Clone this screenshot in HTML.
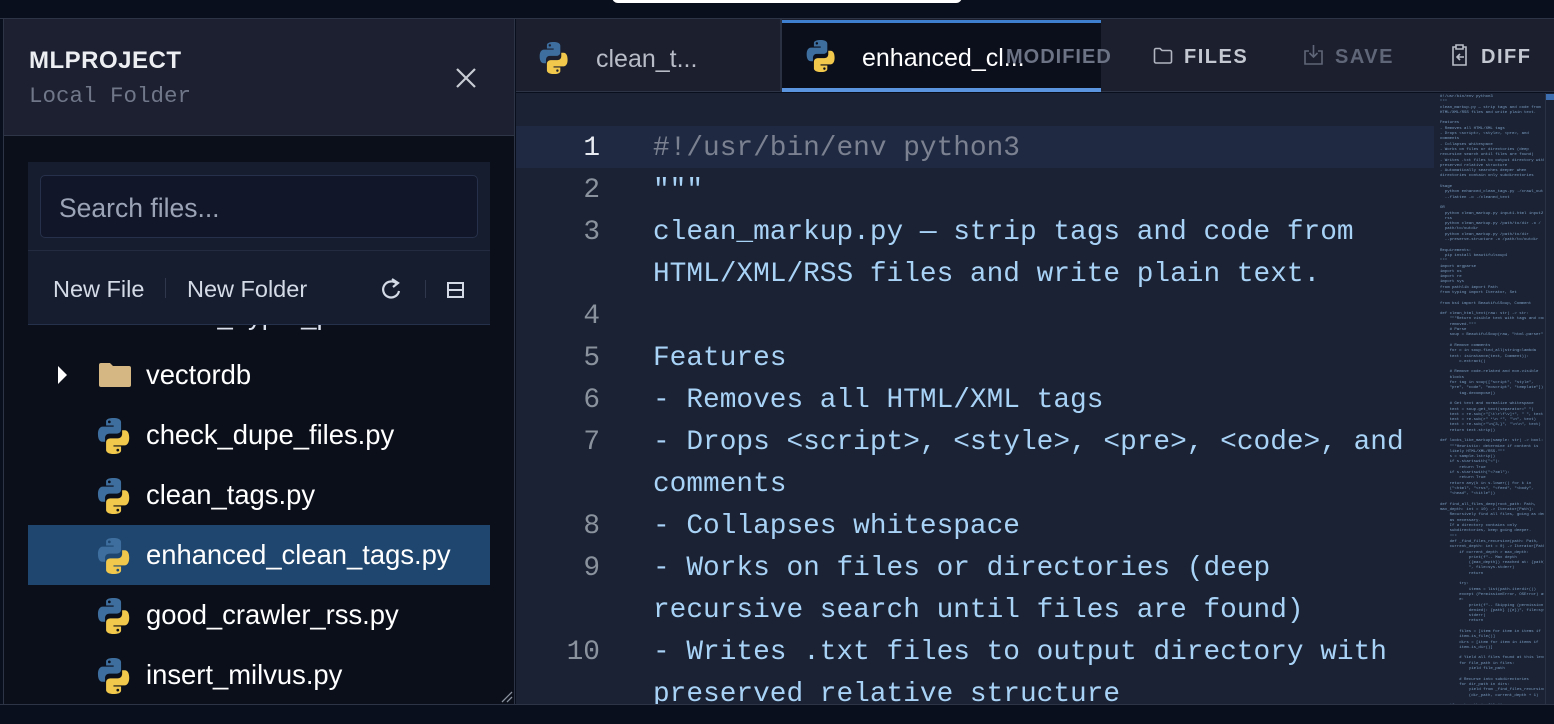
<!DOCTYPE html>
<html><head><meta charset="utf-8">
<style>
*{margin:0;padding:0;box-sizing:border-box}
html,body{width:1554px;height:724px;overflow:hidden}
body{background:#0a0f1d;font-family:"Liberation Sans",sans-serif;position:relative}
.abs{position:absolute}
.mono{font-family:"Liberation Mono",monospace}
.code{position:absolute;left:653px;font-family:"Liberation Mono",monospace;font-size:27.8px;color:#a9d2f7;white-space:pre;line-height:42px}
.ln{position:absolute;width:84px;left:516px;text-align:right;font-family:"Liberation Mono",monospace;font-size:27.8px;color:#8a929e;line-height:42px}
.row{position:absolute;left:28px;width:462px;height:60px;color:#fff;font-size:27.4px;line-height:60px}
.row .t{position:absolute;left:118px}
.row svg{position:absolute;left:67px;top:12px}
</style></head><body>
<svg width="0" height="0" style="position:absolute"><defs>
<g id="py">
<path d="M17.5 1C10 1 10.5 4.3 10.5 4.3V8h7.2v1.1H7.6S2.8 8.6 2.8 16.2s4.2 7.3 4.2 7.3h2.5v-3.5s-.1-4.2 4.1-4.2h7.1s4-.1 4-3.9V5.1S25.3 1 17.5 1zM13.6 3.3a1.3 1.3 0 110 2.6 1.3 1.3 0 010-2.6z" fill="#3d6e9e"/>
<path d="M17.7 35c7.5 0 7-3.3 7-3.3V28h-7.2v-1.1h10.1s4.8.5 4.8-7.1-4.2-7.3-4.2-7.3h-2.5V16s.1 4.2-4.1 4.2h-7.1s-4 .1-4 3.900v6.8S9.9 35 17.7 35zm3.9-2.3a1.3 1.3 0 110-2.6 1.3 1.3 0 010 2.6z" fill="#f1c84b"/>
</g></defs></svg>

<div class="abs" style="left:612px;top:-4px;width:350px;height:7px;background:#fff;border-radius:0 0 6px 6px"></div>
<div class="abs" style="left:0;top:18px;width:1554px;height:1px;background:#2c3446"></div>

<!-- sidebar -->
<div class="abs" style="left:3px;top:19px;width:512px;height:686px;background:#0b0f1a;border-left:1px solid #2c3446;border-right:1px solid #2c3446"></div>
<div class="abs" style="left:4px;top:19px;width:510px;height:117px;background:#1c2030;border-bottom:1px solid #2e3547"></div>
<div class="abs" style="left:29px;top:47px;color:#eceef2;font-weight:bold;font-size:24px;letter-spacing:0.5px">MLPROJECT</div>
<div class="abs mono" style="left:29px;top:83px;color:#707789;font-size:22.5px">Local Folder</div>
<svg class="abs" style="left:456px;top:68px" width="20" height="20"><path d="M1 1L19 19M19 1L1 19" stroke="#c8ccd4" stroke-width="2.2"/></svg>

<div class="row" style="top:285px;color:#dbe2ee"><span class="t" style="top:0">check_hyper_p</span></div>
<div class="abs" style="left:28px;top:162px;width:462px;height:163px;background:#161d2f;border-bottom:1px solid #25304a"></div>
<div class="abs" style="left:40px;top:175px;width:438px;height:63px;background:#111729;border:1px solid #27304a;border-radius:5px"></div>
<div class="abs" style="left:59px;top:193px;color:#9ba4b6;font-size:26.5px">Search files...</div>
<div class="abs" style="left:28px;top:250px;width:462px;height:1px;background:#222b40"></div>
<div class="abs" style="left:53px;top:276px;color:#d4dbe7;font-size:23.5px">New File</div>
<div class="abs" style="left:165px;top:278px;width:1px;height:20px;background:#2e374c"></div>
<div class="abs" style="left:187px;top:276px;color:#d4dbe7;font-size:23.5px">New Folder</div>
<svg class="abs" style="left:381px;top:276px" width="22" height="24" viewBox="0 0 22 24"><path d="M16 8A8 8 0 1 0 18 15" fill="none" stroke="#d4dbe7" stroke-width="2.2"/><path d="M11 3l6 4-5 4" fill="none" stroke="#d4dbe7" stroke-width="2.2"/></svg>
<div class="abs" style="left:425px;top:280px;width:1px;height:18px;background:#2e374c"></div>
<svg class="abs" style="left:447px;top:282px" width="17" height="16"><rect x="1" y="1" width="15" height="14" fill="none" stroke="#d4dbe7" stroke-width="2"/><path d="M1 8h15" stroke="#d4dbe7" stroke-width="2"/></svg>

<div class="row" style="top:345px"><svg width="14" height="20" style="left:28px;top:20px"><path d="M2 1l9 9-9 9z" fill="#fff"/></svg><svg width="32" height="26" style="left:71px;top:17px"><path d="M0 3a2 2 0 012-2h9l3 3h16a2 2 0 012 2v17a2 2 0 01-2 2H2a2 2 0 01-2-2z" fill="#d4b782"/></svg><span class="t">vectordb</span></div>
<div class="row" style="top:405px"><svg width="38" height="38" viewBox="2 0 32 36"><use href="#py"/></svg><span class="t">check_dupe_files.py</span></div>
<div class="row" style="top:465px"><svg width="38" height="38" viewBox="2 0 32 36"><use href="#py"/></svg><span class="t">clean_tags.py</span></div>
<div class="row" style="top:525px;background:#1f466e"><svg width="38" height="38" viewBox="2 0 32 36"><use href="#py"/></svg><span class="t">enhanced_clean_tags.py</span></div>
<div class="row" style="top:585px"><svg width="38" height="38" viewBox="2 0 32 36"><use href="#py"/></svg><span class="t">good_crawler_rss.py</span></div>
<div class="row" style="top:645px"><svg width="38" height="38" viewBox="2 0 32 36"><use href="#py"/></svg><span class="t">insert_milvus.py</span></div>
<svg class="abs" style="left:500px;top:690px" width="14" height="14"><path d="M2 12L12 2M7 12L12 7" stroke="#8a92a0" stroke-width="1.3"/></svg>
<div class="abs" style="left:0;top:704px;width:1554px;height:1px;background:#2c3446"></div>

<!-- tabs -->
<div class="abs" style="left:516px;top:19px;width:1038px;height:73px;background:#1c1f2e;border-bottom:1px solid #2c3446"></div>
<svg class="abs" style="left:537px;top:41px" width="34" height="34" viewBox="2 0 32 36"><use href="#py"/></svg>
<div class="abs" style="left:596px;top:45px;color:#b7bcc7;font-size:25px">clean_t...</div>
<div class="abs" style="left:780px;top:19px;width:2px;height:73px;background:#2a3142"></div>
<div class="abs" style="left:782px;top:20px;width:319px;height:72px;background:#0b0e1b;border-top:3px solid #3f7fd0;border-bottom:4px solid #5b95e0"></div>
<svg class="abs" style="left:804px;top:39px" width="34" height="34" viewBox="2 0 32 36"><use href="#py"/></svg>
<div class="abs" style="left:862px;top:44px;color:#fff;font-size:25px">enhanced_cl...</div>
<div class="abs" style="left:1006px;top:46px;color:#6c7384;font-size:20px;letter-spacing:1px;font-weight:bold">MODIFIED</div>
<svg class="abs" style="left:1153px;top:47px" width="20" height="18"><path d="M1.5 3a1.5 1.5 0 011.5-1.5h4l2 2h8a1.5 1.5 0 011.5 1.5v9.5a1.5 1.5 0 01-1.5 1.5H3a1.5 1.5 0 01-1.5-1.5z" fill="none" stroke="#b0b5c0" stroke-width="1.6"/></svg>
<div class="abs" style="left:1184px;top:46px;color:#c3c8d1;font-size:20px;font-weight:bold;letter-spacing:1.5px">FILES</div>
<svg class="abs" style="left:1303px;top:44px" width="22" height="22"><path d="M6 7H2v13h17V7h-4" fill="none" stroke="#5f6677" stroke-width="1.6"/><path d="M10.5 1v12M6.5 9l4 4 4-4" fill="none" stroke="#5f6677" stroke-width="1.6"/></svg>
<div class="abs" style="left:1335px;top:46px;color:#5f6677;font-size:20px;font-weight:bold;letter-spacing:1.5px">SAVE</div>
<svg class="abs" style="left:1451px;top:43px" width="18" height="24"><path d="M5 4H2v18h13V4h-3M5 2h7v4H5z" fill="none" stroke="#b8bdc7" stroke-width="1.6"/><path d="M13 14H6M9 11l-3 3 3 3" fill="none" stroke="#b8bdc7" stroke-width="1.6"/></svg>
<div class="abs" style="left:1481px;top:46px;color:#c3c8d1;font-size:20px;font-weight:bold;letter-spacing:1.5px">DIFF</div>

<!-- editor -->
<div class="abs" style="left:516px;top:93px;width:1038px;height:611px;background:#1a2233;overflow:hidden">
<div class="abs" style="left:0;top:33px;width:918px;height:42px;background:#1f2a42"></div>
</div>
<div class="abs" style="left:0;top:0;width:1554px;height:704px;overflow:hidden">
<div class="ln" style="top:128px;color:#e8ecf2">1</div>
<div class="ln" style="top:170px">2</div>
<div class="ln" style="top:212px">3</div>
<div class="ln" style="top:296px">4</div>
<div class="ln" style="top:338px">5</div>
<div class="ln" style="top:380px">6</div>
<div class="ln" style="top:422px">7</div>
<div class="ln" style="top:506px">8</div>
<div class="ln" style="top:548px">9</div>
<div class="ln" style="top:632px">10</div>
<div class="code" style="top:128px;color:#7b8190">#!/usr/bin/env python3</div>
<div class="code" style="top:170px">"""
clean_markup.py — strip tags and code from
HTML/XML/RSS files and write plain text.

Features
- Removes all HTML/XML tags
- Drops &lt;script&gt;, &lt;style&gt;, &lt;pre&gt;, &lt;code&gt;, and
comments
- Collapses whitespace
- Works on files or directories (deep
recursive search until files are found)
- Writes .txt files to output directory with
preserved relative structure</div>
</div>

<!-- minimap -->
<div class="abs" style="left:1434px;top:93px;width:110px;height:611px;overflow:hidden">
<div style="font-family:'Liberation Mono',monospace;font-size:4px;line-height:5.3px;color:#8db3dc;white-space:pre;padding:2px 6px;opacity:.85">#!/usr/bin/env python3
"""
clean_markup.py — strip tags and code from
HTML/XML/RSS files and write plain text.

Features
- Removes all HTML/XML tags
- Drops &lt;script&gt;, &lt;style&gt;, &lt;pre&gt;, and
comments
- Collapses whitespace
- Works on files or directories (deep
recursive search until files are found)
- Writes .txt files to output directory with
preserved relative structure
- Automatically searches deeper when
directories contain only subdirectories

Usage
  python enhanced_clean_tags.py ./crawl_out
  --flatten -o ./cleaned_text

OR
  python clean_markup.py input1.html input2.
  rss
  python clean_markup.py /path/to/dir -o /
  path/to/outdir
  python clean_markup.py /path/to/dir
  --preserve-structure -o /path/to/outdir

Requirements:
  pip install beautifulsoup4
"""
import argparse
import os
import re
import sys
from pathlib import Path
from typing import Iterator, Set

from bs4 import BeautifulSoup, Comment

def clean_html_text(raw: str) -> str:
    """Return visible text with tags and code
    removed."""
    # Parse
    soup = BeautifulSoup(raw, "html.parser")

    # Remove comments
    for c in soup.find_all(string=lambda
    text: isinstance(text, Comment)):
        c.extract()

    # Remove code-related and non-visible
    blocks
    for tag in soup(["script", "style",
    "pre", "code", "noscript", "template"]):
        tag.decompose()

    # Get text and normalize whitespace
    text = soup.get_text(separator=" ")
    text = re.sub(r"[\t\r\f\v]+", " ", text)
    text = re.sub(r" *\n *", "\n", text)
    text = re.sub(r"\n{3,}", "\n\n", text)
    return text.strip()

def looks_like_markup(sample: str) -> bool:
    """Heuristic: determine if content is
    likely HTML/XML/RSS."""
    s = sample.lstrip()
    if s.startswith("&lt;"):
        return True
    if s.startswith("&lt;?xml"):
        return True
    return any(k in s.lower() for k in
    ("&lt;html", "&lt;rss", "&lt;feed", "&lt;body",
    "&lt;head", "&lt;title"))

def find_all_files_deep(root_path: Path,
max_depth: int = 10) -> Iterator[Path]:
    Recursively find all files, going as deep
    as necessary.
    If a directory contains only
    subdirectories, keep going deeper.
    """
    def _find_files_recursive(path: Path,
    current_depth: int = 0) -> Iterator[Path]:
        if current_depth > max_depth:
            print(f"-- Max depth
            ({max_depth}) reached at: {path}
            ", file=sys.stderr)
            return

        try:
            items = list(path.iterdir())
        except (PermissionError, OSError) as
        e:
            print(f"-- Skipping (permission
            denied): {path} ({e})", file=sys.
            stderr)
            return

        files = [item for item in items if
        item.is_file()]
        dirs = [item for item in items if
        item.is_dir()]

        # Yield all files found at this level
        for file_path in files:
            yield file_path

        # Recurse into subdirectories
        for dir_path in dirs:
            yield from _find_files_recursive
            (dir_path, current_depth + 1)

    if root_path.is_file():
        yield root_path
    elif root_path.is_dir():
        yield from _find_files_recursive
        (root_path)
    else:
        print(f"-- Skipping (not found):
        {root_path}", file=sys.stderr)</div>
</div>
<div class="abs" style="left:1545px;top:93px;width:9px;height:611px;background:#1a2233;border-left:1px solid #2a3346"></div>
<div class="abs" style="left:1546px;top:94px;width:8px;height:6px;background:#3d6fb0"></div>
<div class="abs" style="left:0;top:705px;width:1554px;height:19px;background:#0a0f1d"></div>
</body></html>
